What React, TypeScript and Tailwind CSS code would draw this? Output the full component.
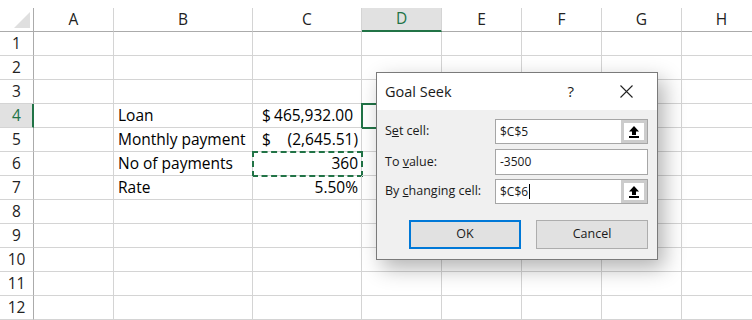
import React from 'react';

const cols = ['A', 'B', 'C', 'D', 'E', 'F', 'G', 'H'];
const rows = [1, 2, 3, 4, 5, 6, 7, 8, 9, 10, 11, 12];
const widths = ['w-[80px]', 'w-[139px]', 'w-[109px]', 'w-[80px]', 'w-[80px]', 'w-[80px]', 'w-[80px]', 'w-[80px]'];

const UploadIcon = () => (
    <svg width="14" height="14" viewBox="0 0 14 14">
        <path d="M7 1 L12 6.5 L9 6.5 L9 10 L5 10 L5 6.5 L2 6.5 Z" fill="#000" />
        <rect x="2" y="11" width="10" height="2" fill="#000" />
    </svg>
);

const RefButton = () => (
    <div className="w-[26px] h-full bg-[#cccccc] p-[3px] flex">
        <div className="flex-1 bg-white flex items-center justify-center">
            <UploadIcon />
        </div>
    </div>
);

const GoalSeek = () => {
    return (
        <div className="absolute left-[376px] top-[72px] w-[282px] h-[188px] border border-[#7a7a7a] bg-[#f0f0f0] shadow-[6px_8px_20px_rgba(0,0,0,0.3)] font-['Open_Sans',sans-serif] text-[#1a1a1a]">
            <div className="h-[37px] bg-white flex items-center pl-[8px]">
                <span className="text-[14.5px]">Goal Seek</span>
                <span className="ml-auto text-[15px] mr-[46px]">?</span>
                <svg width="13" height="13" viewBox="0 0 13 13" className="mr-[24px]">
                    <path d="M0.5 0.5 L12.5 12.5 M12.5 0.5 L0.5 12.5" stroke="#222" strokeWidth="1.1" />
                </svg>
            </div>

            <div className="flex flex-col text-[12.5px] pt-[9px] pl-[8px] pr-[9px]">
                <div className="flex items-center h-[25px]">
                    <span className="w-[110px]">S<u>e</u>t cell:</span>
                    <div className="flex-1 h-full border border-[#a6a6a6] bg-white flex">
                        <div className="flex-1 flex items-center pl-[4px] text-[12px]">$C$5</div>
                        <RefButton />
                    </div>
                </div>
                <div className="flex items-center h-[26px] mt-[5px]">
                    <span className="w-[110px]">To <u>v</u>alue:</span>
                    <div className="flex-1 h-full border border-[#a6a6a6] bg-white flex items-center pl-[4px] text-[12px]">-3500</div>
                </div>
                <div className="flex items-center h-[25px] mt-[4px]">
                    <span className="w-[110px]">By <u>c</u>hanging cell:</span>
                    <div className="flex-1 h-full border border-[#a6a6a6] bg-white flex">
                        <div className="flex-1 flex items-center pl-[4px] text-[12px]">
                            $C$6<span className="inline-block w-px h-[15px] bg-black ml-[1px]"></span>
                        </div>
                        <RefButton />
                    </div>
                </div>
                <div className="flex mt-[16px] pl-[24px] gap-[15px]">
                    <div className="w-[112px] h-[29px] bg-[#e1e1e1] border-2 border-[#0078d7] flex items-center justify-center">OK</div>
                    <div className="w-[112px] h-[29px] bg-[#e1e1e1] border border-[#adadad] flex items-center justify-center">Cancel</div>
                </div>
            </div>
        </div>
    );
};

const cellText: Record<string, React.ReactNode> = {
    'B4': <span className="pl-[4px]">Loan</span>,
    'B5': <span className="pl-[4px]">Monthly payment</span>,
    'B6': <span className="pl-[4px]">No of payments</span>,
    'B7': <span className="pl-[4px]">Rate</span>,
    'C4': <div className="flex w-full pl-[9px] pr-[8px]"><span>$</span><span className="ml-auto">465,932.00</span></div>,
    'C5': <div className="flex w-full pl-[9px] pr-[3px]"><span>$</span><span className="ml-auto">(2,645.51)</span></div>,
    'C6': <div className="flex w-full pr-[3px]"><span className="ml-auto">360</span></div>,
    'C7': <div className="flex w-full pr-[3px]"><span className="ml-auto">5.50%</span></div>,
};

const App = () => {
    return (
        <div className="relative w-[752px] h-[320px] overflow-hidden bg-white font-['Open_Sans',sans-serif] text-[#222]">
            <div className="h-[8px]"></div>

            {/* column headers */}
            <div className="flex h-[24px]">
                <div className="w-[34px] shrink-0 border-r border-b border-[#ababab] relative">
                    <div className="absolute right-[3px] bottom-[3px] w-0 h-0 border-l-[16px] border-l-transparent border-b-[16px] border-b-[#dfdfdf]"></div>
                </div>
                {cols.map((c, i) => (
                    <div
                        key={c}
                        className={`${widths[i]} shrink-0 flex items-center justify-center text-[15.5px] border-r border-[#d4d4d4] ${c === 'D' ? 'bg-[#e1e1e1] text-[#217346] border-b-2 border-b-[#217346]' : 'border-b border-b-[#ababab]'}`}
                    >
                        {c}
                    </div>
                ))}
            </div>

            {rows.map((r) => (
                <div key={r} className="flex h-[24px]">
                    <div className={`w-[34px] shrink-0 flex items-center justify-center text-[15.5px] border-b border-b-[#d4d4d4] ${r === 4 ? 'bg-[#e1e1e1] text-[#217346] border-r-2 border-r-[#217346] pl-[1px]' : 'border-r border-r-[#ababab]'}`}>
                        {r}
                    </div>
                    {cols.map((c, i) => {
                        const key = `${c}${r}`;
                        let extra = '';
                        if (key === 'C6') extra = 'outline-2 outline-dashed outline-[#217346] -outline-offset-1';
                        if (key === 'D4') extra = 'outline-2 outline-[#217346] -outline-offset-1';
                        return (
                            <div
                                key={key}
                                className={`${widths[i]} shrink-0 flex items-center text-[15.5px] text-black border-r border-b border-[#d4d4d4] ${extra}`}
                            >
                                {cellText[key]}
                            </div>
                        );
                    })}
                </div>
            ))}

            <GoalSeek />
        </div>
    );
};

export default App;
